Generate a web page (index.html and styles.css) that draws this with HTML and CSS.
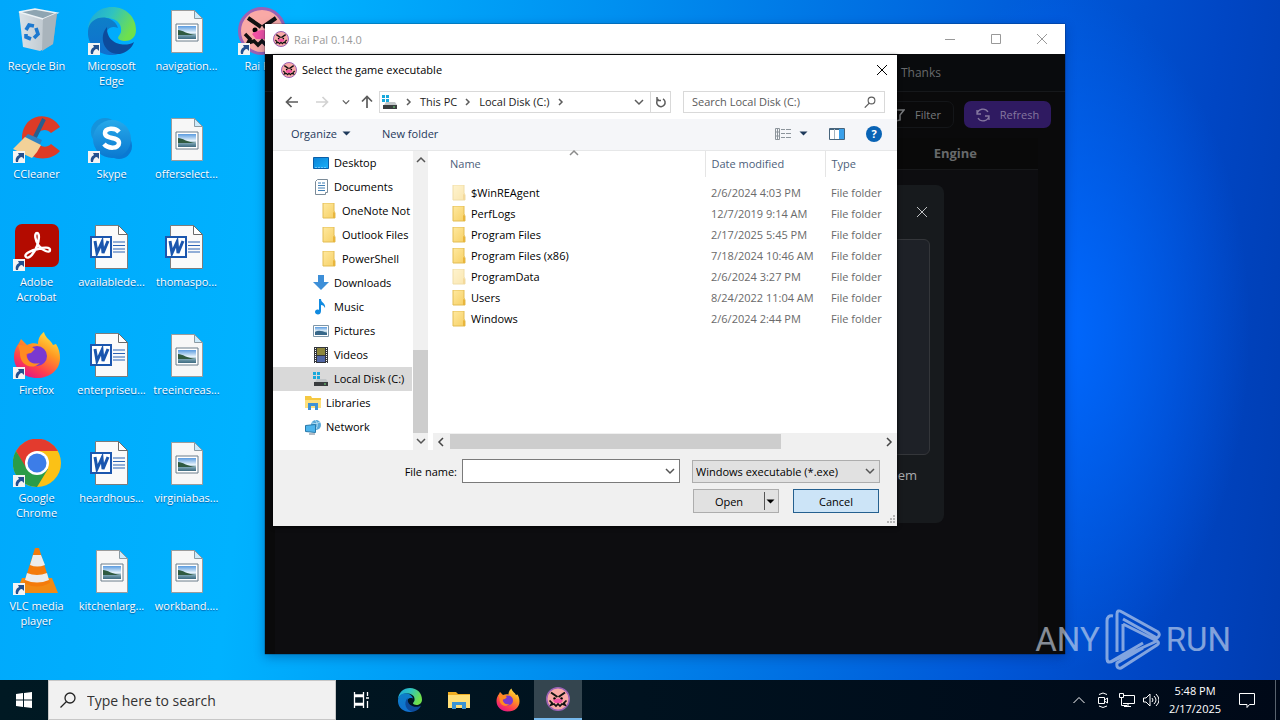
FILE: index.html
```html
<!DOCTYPE html>
<html lang="en">
<head>
<meta charset="utf-8">
<title>Desktop</title>
<link rel="stylesheet" href="styles.css">
</head>
<body>
<svg class="sprite" aria-hidden="true">
  <defs>
    <linearGradient id="g-edge" x1="0" y1="0" x2="1" y2="0.4"><stop offset="0" stop-color="#1aa5dc"/><stop offset="0.5" stop-color="#2fc3c0"/><stop offset="1" stop-color="#6fe04c"/></linearGradient>
    <linearGradient id="g-edge2" x1="0" y1="0" x2="0" y2="1"><stop offset="0" stop-color="#0d7fc8"/><stop offset="1" stop-color="#1070cf"/></linearGradient>
    <linearGradient id="g-ff" x1="0.9" y1="0" x2="0.3" y2="1"><stop offset="0" stop-color="#fff04a"/><stop offset="0.4" stop-color="#ff9a22"/><stop offset="0.75" stop-color="#ff3f4e"/><stop offset="1" stop-color="#e31587"/></linearGradient>
    <linearGradient id="g-sky" x1="0" y1="0" x2="0" y2="1"><stop offset="0" stop-color="#27a9ea"/><stop offset="1" stop-color="#0a78d0"/></linearGradient>
    <linearGradient id="g-pic" x1="0" y1="0" x2="0" y2="1"><stop offset="0" stop-color="#5a9be0"/><stop offset="0.5" stop-color="#e4f1fa"/><stop offset="0.75" stop-color="#6d97a8"/><stop offset="1" stop-color="#3e6b80"/></linearGradient>
    <linearGradient id="g-bin" x1="0" y1="0" x2="1" y2="0"><stop offset="0" stop-color="#d9e2e8"/><stop offset="0.6" stop-color="#c3ccd3"/><stop offset="1" stop-color="#8e9aa3"/></linearGradient>
    <linearGradient id="g-fold" x1="0" y1="0" x2="1" y2="1"><stop offset="0" stop-color="#ffe9a0"/><stop offset="1" stop-color="#f6cf63"/></linearGradient>
    <linearGradient id="g-desk" x1="0" y1="0" x2="1" y2="1"><stop offset="0" stop-color="#0c83d6"/><stop offset="1" stop-color="#18b0fa"/></linearGradient>
  </defs>
  <symbol id="i-link" viewBox="0 0 12 12"><path d="M0 0h12v12H0z" fill="#f4f4f4"/><path d="M3 11C2 7 4 5 6 4L5 2h6v6L9 6C7 6 5 8 5 11z" fill="#24508f"/></symbol>
  <symbol id="i-bin" viewBox="0 0 48 48"><path d="M6 5l4 35 17 4 13-7 4-31z" fill="url(#g-bin)"/><path d="M6 5l16-3 22 4-14 6z" fill="#8ea5b2" stroke="#edf3f6" stroke-width="1.5"/><path d="M30 12l-1 32 11-7 4-31z" fill="#a9b4bc"/><g fill="none" stroke="#1d79d0" stroke-width="3.6"><path d="M13 23l3-5 5 1M23 21l2 6-4 4M18 32l-5-2v-3"/></g></symbol>
  <symbol id="i-edge" viewBox="0 0 48 48"><path d="M24 0C11 0 1 9 0 22 4 13 13 10 20 11c11 1 14 8 13 14-1 3-3 4-3 6 1 4 18 6 18-8C48 10 38 0 24 0z" fill="url(#g-edge)"/><path d="M0 24C1 12 13 8 22 12c4 2 7 5 8 9-8-3-12 2-12 8 0 9 8 18 19 14-4 3-8 5-13 5C10 48-1 38 0 24z" fill="url(#g-edge2)"/><path d="M19 20c-9 10-3 28 13 27 7-2 12-6 14-12-9 6-28 2-27-15z" fill="#0d4b9c"/></symbol>
  <symbol id="i-pic" viewBox="0 0 32 43"><path d="M.5.5h23l8 8v34H.5z" fill="#f7f7f7" stroke="#9c9c9c"/><path d="M23.500.5v8h8z" fill="#cdeafa" stroke="#8b9aa3"/><path d="M5 14h22v17H5z" fill="#fff" stroke="#6a7d8a"/><path d="M7 16h18v13H7z" fill="url(#g-pic)"/><path d="M7 20c5 0 8 4 18 5H7z" fill="#2f5a40"/></symbol>
  <symbol id="i-word" viewBox="0 0 38 44"><path d="M5.500.5h23l9 9v34h-32z" fill="#fafafa" stroke="#7c7c7c"/><path d="M28.500.5v9h9z" fill="#fff" stroke="#6b6b6b"/><path d="M23 17h12M23 20.500h12M23 24h12M23 27h12" stroke="#2b62b4"/><path d="M1 12h20v20H1z" fill="#fff" stroke="#1b56ae" stroke-width="2"/><path d="M5 16l2 12 5-11 1 11 5-12" fill="none" stroke="#1b56ae" stroke-width="3"/></symbol>
  <symbol id="i-rai" viewBox="0 0 48 48"><circle cx="24" cy="24" r="22.500" fill="#f9a9a6" stroke="#9a62b5" stroke-width="3"/><path d="M10 11l13 9M38 11l-13 9" stroke="#111" stroke-width="4"/><circle cx="17" cy="23" r="2.500"/><circle cx="31" cy="23" r="2.500"/><path d="M14 27q10-8 20 0l-4 5H18z" fill="#f452a4"/><path d="M7 27l5 5-2 4 6-2 4 4 4-4 4 4 4-4 6 2-2-4 5-5" fill="none" stroke="#111" stroke-width="3.500"/></symbol>
  <symbol id="i-cc" viewBox="0 0 48 48"><path d="M47 12C40 0 25-2 16 6 7 14 6 32 17 40c10 6 23 4 30-4l-9-7c-5 5-13 3-14-5-1-9 9-12 14-6z" fill="#dd3b26"/><path d="M31 4L22 22" stroke="#275f8e" stroke-width="4"/><path d="M15 19l14 6-3 7-16-8z" fill="#2b83c4"/><path d="M12 22l16 8-4 7-5 6L0 34z" fill="#f2d198"/></symbol>
  <symbol id="i-skype" viewBox="0 0 48 48"><circle cx="17" cy="17" r="14" fill="#1593dc"/><circle cx="31" cy="31" r="13" fill="#0a79d2"/><circle cx="24" cy="24" r="19" fill="url(#g-sky)"/><path d="M31 17c-4-5-14-4-14 1 0 7 14 3 14 10 0 6-11 6-15 1" fill="none" stroke="#fff" stroke-width="4.500"/></symbol>
  <symbol id="i-acro" viewBox="0 0 48 48"><rect x="2" y="1" width="44" height="43" rx="7" fill="#b30b00"/><path d="M13 34c-3-3 6-7 12-8 6-2 12-2 12 1 0 4-8 0-11-4-4-5-5-13-2-13s2 8 0 13c-2 6-8 14-11 11z" fill="none" stroke="#fff" stroke-width="2.400"/></symbol>
  <symbol id="i-ff" viewBox="0 0 48 48"><path d="M6 12l2-4 6 6c4-2 8-2 11-1 0-6 3-10 6-12 1 6 7 8 9 13l3-1c3 5 4 9 4 14 0 12-10 20-23 20S1 38 1 26c0-6 2-10 5-14z" fill="url(#g-ff)"/><circle cx="24" cy="25" r="10" fill="#7a38d0"/><path d="M5 14c8 0 13 1 17 4l-4 4-5 1c1 8 7 11 14 9-8 8-21 2-20-11z" fill="#ff8b22"/></symbol>
  <symbol id="i-chrome" viewBox="0 0 48 48"><circle cx="24" cy="24" r="24" fill="#fbc116"/><path d="M24 12h21a24 24 0 0 0-42 0l10 18z" fill="#e33b2e"/><path d="M3 12a24 24 0 0 0 21 36l11-18H14z" fill="#2a9c48"/><circle cx="24" cy="24" r="12" fill="#fff"/><circle cx="24" cy="24" r="9.500" fill="#3c7de8"/></symbol>
  <symbol id="i-vlc" viewBox="0 0 48 48"><path d="M9 31h30l6 15H3z" fill="#f28a14"/><path d="M22 1h4l11 35q-13 7-26 0z" fill="#f47b0b"/><path d="M20 8h8l4 10q-8 3-15 0zM14 26q10 4 20 0l2 7q-12 5-24 0z" fill="#ececec"/></symbol>
  <symbol id="i-fold" viewBox="0 0 14 16"><path d="M1 0h11v8l1 2v5H1z" fill="url(#g-fold)" stroke="#e3bd55"/><path d="M11 9v6h2v-5z" fill="#e8b53c"/></symbol>
  <symbol id="i-desk" viewBox="0 0 16 16"><path d="M.5 2.500h15v11H.5z" fill="url(#g-desk)" stroke="#0a5ea8"/><path d="M2 12.500h12" stroke="#6cc6fa" stroke-dasharray="2 1"/></symbol>
  <symbol id="i-doc" viewBox="0 0 16 16"><path d="M4.500.5h10v13h-2v2h-10v-13z" fill="#fff" stroke="#7b8b98"/><path d="M5 4h3M5 6.500h7M5 9h7M5 11.500h7M9 4h3" stroke="#3f7fb5"/></symbol>
  <symbol id="i-down" viewBox="0 0 16 16"><path d="M5 0h6v7h5l-8 8-8-8h5z" fill="#3d8fd8"/></symbol>
  <symbol id="i-music" viewBox="0 0 16 16"><path d="M6 0h2c0 4 5 4 4 9-1-2-2-3-4-3v6c0 5-6 4-6 1 0-2 2-3 4-2z" fill="#108ae0"/></symbol>
  <symbol id="i-pics" viewBox="0 0 16 16"><path d="M.5 2.500h15v11H.5z" fill="#fff" stroke="#7d96a8"/><path d="M2 4h12v8H2z" fill="url(#g-pic)"/><path d="M2 9q4-3 12 1v2H2z" fill="#38688a"/></symbol>
  <symbol id="i-vid" viewBox="0 0 16 16"><path d="M1 0h14v16H1z" fill="#33363c"/><path d="M4 1h8v7H4z" fill="#8d873c"/><path d="M4 9h8v6H4z" fill="#5167a6"/><path d="M2.500 1v15M13.500 1v15" stroke="#fff" stroke-dasharray="1 1"/></symbol>
  <symbol id="i-disk" viewBox="0 0 16 16"><path d="M0 1h3v3H0zM4 1h3v3H4zM0 5h3v3H0zM4 5h3v3H4z" fill="#19a9dc"/><path d="M4 8h9l2 3H2z" fill="#c2c6c8"/><path d="M1 11h14v4H1z" fill="#3a3d3f"/><path d="M11 13h2" stroke="#6fe07b"/></symbol>
  <symbol id="i-lib" viewBox="0 0 16 16"><path d="M0 1h6l1 2h9v10H0z" fill="#f5c842"/><path d="M0 5h16v8H0z" fill="#ffe07c"/><path d="M3 15V8h10v7h-3v-4H6v4z" fill="#3e92d6"/></symbol>
  <symbol id="i-net" viewBox="0 0 16 16"><circle cx="11" cy="6" r="5" fill="#58a8d8"/><path d="M7 4q4 2 8-1M10 1q4 4 1 9" stroke="#b3ddf2" fill="none"/><path d="M.5 6.500l10-1v8l-10-1z" fill="#4db4ec" stroke="#2878a8"/><path d="M4 15h6" stroke="#67788a"/></symbol>
  <symbol id="i-down-chev" viewBox="0 0 10 10"><path d="M1 3l4 4 4-4" fill="none" stroke="currentColor" stroke-width="1.500"/></symbol>
  <symbol id="i-right-chev" viewBox="0 0 10 10"><path d="M3 2l3 3-3 3" fill="none" stroke="currentColor" stroke-width="1.500"/></symbol>
  <symbol id="i-x" viewBox="0 0 12 12"><path d="M1 1l10 10M11 1L1 11" fill="none" stroke="currentColor"/></symbol>
  <symbol id="i-glass" viewBox="0 0 16 16"><circle cx="10" cy="6" r="4.500" fill="none" stroke="currentColor" stroke-width="1.500"/><path d="M7 9.500l-6 6" stroke="currentColor" stroke-width="1.700"/></symbol>
  <symbol id="i-arrow" viewBox="0 0 14 12"><path d="M13 6H2M6.500 1L1.500 6l5 5" fill="none" stroke="currentColor" stroke-width="1.700"/></symbol>
  <symbol id="i-tri" viewBox="0 0 8 5"><path d="M0 .5h8l-4 4z" fill="currentColor"/></symbol>
</svg>

<main class="desktop">
  <ul class="shortcuts">
    <li><span class="art"><svg class="big"><use href="#i-bin"/></svg></span>Recycle Bin</li>
    <li><span class="art"><svg class="big"><use href="#i-cc"/></svg><svg class="link"><use href="#i-link"/></svg></span>CCleaner</li>
    <li><span class="art"><svg class="big"><use href="#i-acro"/></svg><svg class="link"><use href="#i-link"/></svg></span>Adobe Acrobat</li>
    <li><span class="art"><svg class="big"><use href="#i-ff"/></svg><svg class="link"><use href="#i-link"/></svg></span>Firefox</li>
    <li><span class="art"><svg class="big"><use href="#i-chrome"/></svg><svg class="link"><use href="#i-link"/></svg></span>Google Chrome</li>
    <li><span class="art"><svg class="big"><use href="#i-vlc"/></svg><svg class="link"><use href="#i-link"/></svg></span>VLC media player</li>
    <li><span class="art"><svg class="big"><use href="#i-edge"/></svg><svg class="link"><use href="#i-link"/></svg></span>Microsoft Edge</li>
    <li><span class="art"><svg class="big"><use href="#i-skype"/></svg><svg class="link"><use href="#i-link"/></svg></span>Skype</li>
    <li><span class="art"><svg class="word"><use href="#i-word"/></svg></span>availablede...</li>
    <li><span class="art"><svg class="word"><use href="#i-word"/></svg></span>enterpriseu...</li>
    <li><span class="art"><svg class="word"><use href="#i-word"/></svg></span>heardhous...</li>
    <li><span class="art"><svg class="file"><use href="#i-pic"/></svg></span>kitchenlarg...</li>
    <li><span class="art"><svg class="file"><use href="#i-pic"/></svg></span>navigation...</li>
    <li><span class="art"><svg class="file"><use href="#i-pic"/></svg></span>offerselect...</li>
    <li><span class="art"><svg class="word"><use href="#i-word"/></svg></span>thomaspo...</li>
    <li><span class="art"><svg class="file"><use href="#i-pic"/></svg></span>treeincreas...</li>
    <li><span class="art"><svg class="file"><use href="#i-pic"/></svg></span>virginiabas...</li>
    <li><span class="art"><svg class="file"><use href="#i-pic"/></svg></span>workband....</li>
    <li><span class="art"><svg class="big"><use href="#i-rai"/></svg><svg class="link"><use href="#i-link"/></svg></span>Rai Pal</li>
  </ul>

  <section class="app" aria-label="Rai Pal">
    <header class="app-title">
      <svg class="i16"><use href="#i-rai"/></svg><span>Rai Pal 0.14.0</span>
      <div class="caption">
        <button aria-label="Minimize"><svg class="i12" viewBox="0 0 12 12"><path d="M1 6.500h10" stroke="currentColor"/></svg></button>
        <button aria-label="Maximize"><svg class="i12" viewBox="0 0 12 12"><path d="M1.500 1.500h9v9h-9z" fill="none" stroke="currentColor"/></svg></button>
        <button aria-label="Close window"><svg class="i12"><use href="#i-x"/></svg></button>
      </div>
    </header>
    <div class="app-body">
      <nav class="tabs"><a href="#thanks">Thanks</a></nav>
      <div class="tools">
        <button class="filter"><svg class="i14" viewBox="0 0 14 14"><path d="M1 2h12L9 7v5l-4 1V7z" fill="none" stroke="currentColor" stroke-width="1.500"/></svg>Filter</button>
        <button class="refresh"><svg class="i14" viewBox="0 0 14 14"><path d="M1 6a6 6 0 0 1 11-2M13 8a6 6 0 0 1-11 2M1 2v4h4M13 12V8H9" fill="none" stroke="currentColor" stroke-width="1.300"/></svg>Refresh</button>
      </div>
      <div class="games"><div class="games-head">Engine</div></div>
      <div class="modal">
        <button aria-label="Close panel"><svg class="i12"><use href="#i-x"/></svg></button>
        <div class="drop"></div>
        <p>them</p>
      </div>
    </div>
  </section>

  <section class="dialog" role="dialog" aria-label="Select the game executable">
    <header class="dlg-title">
      <svg class="i16"><use href="#i-rai"/></svg><h1>Select the game executable</h1>
      <button aria-label="Close"><svg class="i12"><use href="#i-x"/></svg></button>
    </header>
    <div class="address">
      <button aria-label="Back"><svg class="arrow"><use href="#i-arrow"/></svg></button>
      <button class="off" aria-label="Forward"><svg class="arrow flip"><use href="#i-arrow"/></svg></button>
      <button class="small" aria-label="Recent"><svg class="i8"><use href="#i-down-chev"/></svg></button>
      <button class="small" aria-label="Up"><svg class="arrow up"><use href="#i-arrow"/></svg></button>
      <div class="path">
        <svg class="i16"><use href="#i-disk"/></svg><svg class="i10"><use href="#i-right-chev"/></svg>
        <a href="#pc">This PC</a><svg class="i10"><use href="#i-right-chev"/></svg>
        <a href="#c">Local Disk (C:)</a><svg class="i10"><use href="#i-right-chev"/></svg>
        <button class="drop-path" aria-label="Previous locations"><svg class="i10"><use href="#i-down-chev"/></svg></button>
        <button class="reload" aria-label="Reload"><svg class="i12" viewBox="0 0 12 12"><path d="M8 2.800A4.200 4.200 0 1 1 3.500 3M2 1v3.500h4" fill="none" stroke="currentColor" stroke-width="1.500"/></svg></button>
      </div>
      <label class="find"><input type="text" placeholder="Search Local Disk (C:)" aria-label="Search Local Disk (C:)"><svg class="i12"><use href="#i-glass"/></svg></label>
    </div>
    <div class="commands">
      <button>Organize <svg class="tri wide"><use href="#i-tri"/></svg></button>
      <button>New folder</button>
      <div class="views">
        <button aria-label="Change view"><svg class="i16" viewBox="0 0 16 16"><path d="M.5 2.500h4v11h-4zM.5 6h4M.5 10h4M2.500 2v12" fill="none" stroke="#8c949b"/><path d="M6 3.500h4M11 3.500h5M6 7.500h4M11 7.500h5M6 11.500h4M11 11.500h5" stroke="#8c949b"/></svg><svg class="tri wide"><use href="#i-tri"/></svg></button>
        <button aria-label="Preview pane"><svg class="i16" viewBox="0 0 16 16"><path d="M.5 2.500h15v11H.5z" fill="#fff" stroke="#46647c"/><path d="M1 3.500h14" stroke="#46647c"/><path d="M10 3h5v10h-5z" fill="#3aa0ea"/><path d="M5.500 3v10" stroke="#a3b3bf"/></svg></button>
        <button class="help" aria-label="Help">?</button>
      </div>
    </div>
    <div class="panes">
      <ul class="tree">
        <li class="l2"><svg class="i16"><use href="#i-desk"/></svg>Desktop</li>
        <li class="l2"><svg class="i16"><use href="#i-doc"/></svg>Documents</li>
        <li class="l3"><svg class="i16"><use href="#i-fold"/></svg>OneNote Not</li>
        <li class="l3"><svg class="i16"><use href="#i-fold"/></svg>Outlook Files</li>
        <li class="l3"><svg class="i16"><use href="#i-fold"/></svg>PowerShell</li>
        <li class="l2"><svg class="i16"><use href="#i-down"/></svg>Downloads</li>
        <li class="l2"><svg class="i16"><use href="#i-music"/></svg>Music</li>
        <li class="l2"><svg class="i16"><use href="#i-pics"/></svg>Pictures</li>
        <li class="l2"><svg class="i16"><use href="#i-vid"/></svg>Videos</li>
        <li class="l2 on"><svg class="i16"><use href="#i-disk"/></svg>Local Disk (C:)</li>
        <li class="l1"><svg class="i16"><use href="#i-lib"/></svg>Libraries</li>
        <li class="l1"><svg class="i16"><use href="#i-net"/></svg>Network</li>
      </ul>
      <div class="vbar"><svg class="i10 up180"><use href="#i-down-chev"/></svg><div class="vthumb"></div><svg class="i10"><use href="#i-down-chev"/></svg></div>
      <div class="list">
        <table>
          <thead><tr><th class="c-name">Name<svg class="sort i10"><use href="#i-down-chev"/></svg></th><th class="c-date">Date modified</th><th>Type</th></tr></thead>
          <tbody>
            <tr><td class="dim"><svg class="i16"><use href="#i-fold"/></svg>$WinREAgent</td><td>2/6/2024 4:03 PM</td><td>File folder</td></tr>
            <tr><td><svg class="i16"><use href="#i-fold"/></svg>PerfLogs</td><td>12/7/2019 9:14 AM</td><td>File folder</td></tr>
            <tr><td><svg class="i16"><use href="#i-fold"/></svg>Program Files</td><td>2/17/2025 5:45 PM</td><td>File folder</td></tr>
            <tr><td><svg class="i16"><use href="#i-fold"/></svg>Program Files (x86)</td><td>7/18/2024 10:46 AM</td><td>File folder</td></tr>
            <tr><td class="dim"><svg class="i16"><use href="#i-fold"/></svg>ProgramData</td><td>2/6/2024 3:27 PM</td><td>File folder</td></tr>
            <tr><td><svg class="i16"><use href="#i-fold"/></svg>Users</td><td>8/24/2022 11:04 AM</td><td>File folder</td></tr>
            <tr><td><svg class="i16"><use href="#i-fold"/></svg>Windows</td><td>2/6/2024 2:44 PM</td><td>File folder</td></tr>
          </tbody>
        </table>
        <div class="hbar"><svg class="i10 left"><use href="#i-down-chev"/></svg><div class="htrack"><div class="hthumb"></div></div><svg class="i10 right"><use href="#i-down-chev"/></svg></div>
      </div>
    </div>
    <form class="choose">
      <label for="fname">File name:</label>
      <div class="combo"><input id="fname" type="text"><svg class="i10"><use href="#i-down-chev"/></svg></div>
      <div class="combo grey"><select aria-label="File type"><option>Windows executable (*.exe)</option></select><svg class="i10"><use href="#i-down-chev"/></svg></div>
      <div class="actions">
        <button type="button" class="open"><span>Open</span><i></i><svg class="tri wide"><use href="#i-tri"/></svg></button>
        <button type="button" class="cancel">Cancel</button>
      </div>
      <svg class="grip" viewBox="0 0 10 10"><path d="M7 0h2v2H7zM4 3h2v2H4zM7 3h2v2H7zM1 6h2v2H1zM4 6h2v2H4zM7 6h2v2H7z" fill="#b5b5b5"/></svg>
    </form>
  </section>

  <div class="mark"><span>ANY</span><svg viewBox="0 0 56 64"><path d="M8 8Q2 7 2 13v38q0 5 5 2l31-18M12 44V6q0-5 5-2l36 20q3 3-1 6L18 11M18 16v27M2 51q1 5 6 2l44-20M18 16l34 17q3 2 0 4L16 60q-5 1-4-5l26-15" fill="none" stroke="currentColor" stroke-width="3"/></svg><span>RUN</span></div>
</main>

<footer class="taskbar">
  <button class="start" aria-label="Start"><svg class="i16" viewBox="0 0 16 16"><path d="M0 2l7-1v6.500H0zM8 1l8-1v7.500H8zM0 8.500h7V15l-7-1zM8 8.500h8V16l-8-1z" fill="#fff"/></svg></button>
  <label class="search"><svg class="i16" viewBox="0 0 16 16"><circle cx="10" cy="6" r="5" fill="none" stroke="currentColor" stroke-width="1.300"/><path d="M6.500 9.500L.5 15.500" stroke="currentColor" stroke-width="1.300"/></svg><input type="text" placeholder="Type here to search" aria-label="Type here to search"></label>
  <div class="pinned">
    <button aria-label="Task View"><svg class="i18" viewBox="0 0 18 18"><path d="M2.500 1v3h9V1M2.500 17v-3h9v3M2.500 5.500h9v7h-9zM15.500 1v4M15.500 10v7M14 7h3" fill="none" stroke="#fff" stroke-width="1.300"/></svg></button>
    <button aria-label="Microsoft Edge"><svg class="i24"><use href="#i-edge"/></svg></button>
    <button aria-label="File Explorer"><svg class="i24" viewBox="0 0 24 24"><path d="M1 4h8l2 2h12v14H1z" fill="#f0ae22"/><path d="M1 7h22v13H1z" fill="#ffdf77"/><path d="M5 21v-7h14v7h-4v-4H9v4z" fill="#3a93d4"/></svg></button>
    <button aria-label="Firefox"><svg class="i24"><use href="#i-ff"/></svg></button>
    <button class="active" aria-label="Rai Pal"><svg class="i24"><use href="#i-rai"/></svg></button>
  </div>
  <div class="tray">
    <svg class="i16" viewBox="0 0 16 16"><path d="M2.500 11L8 5.500l5.500 5.500"/></svg>
    <svg class="i16" viewBox="0 0 16 16"><path d="M3.500 5.500h6v6h-6zM9.500 8l3-2v5l-3-2M4 2.500q4-3 8 0M4 14q4 3 8 0"/></svg>
    <svg class="i16" viewBox="0 0 16 16"><path d="M4 3.500h11.500v8H4M.5 1.500h4v4h-4zM2.500 5.500v8H8M5 14.500h7M9 12v2"/></svg>
    <svg class="i16" viewBox="0 0 16 16"><path d="M.5 6v4h2.500l4 4V2L3 6zM9 6q2 2 0 4M11 4q4 4 0 8M13 2q6 6 0 12"/></svg>
    <time class="clock"><span>5:48 PM</span><span>2/17/2025</span></time>
    <svg class="note i16" viewBox="0 0 16 16"><path d="M.5 1.500h15v11h-5l-2.500 3v-3H.5z"/></svg>
    <div class="peek"></div>
  </div>
</footer>
</body>
</html>
```
FILE: styles.css
```css
* { box-sizing: border-box; }
body { margin: 0; height: 100vh; display: flex; flex-direction: column; overflow: hidden; font: 11px/15px "Open Sans", "Noto Sans", sans-serif; color: #000; }
button, input, select { font: inherit; color: inherit; border: 0; margin: 0; padding: 0; background: none; border-radius: 0; }
button { display: flex; align-items: center; justify-content: center; }
a { color: inherit; text-decoration: none; }
ul { list-style: none; margin: 0; padding: 0; }
svg { flex: none; display: block; }
.sprite { position: absolute; width: 0; height: 0; }
.i8 { width: 8px; height: 8px; }
.i10 { width: 10px; height: 10px; }
.i12 { width: 12px; height: 12px; }
.i14 { width: 14px; height: 14px; }
.i16 { width: 16px; height: 16px; }
.i18 { width: 18px; height: 18px; }
.i24 { width: 24px; height: 24px; }

.desktop { flex: 1; min-height: 0; position: relative; overflow: hidden; background: radial-gradient(ellipse 190px 340px at 1060px 330px, #0068ff 0%, #0060f500 100%), linear-gradient(97deg, #00a8fb 0%, #00b2ff 22%, #0090f0 45%, #0058d8 78%, #0046c4 90%, #003cb0 100%); }
.shortcuts { display: grid; grid-auto-flow: column; grid-template-rows: repeat(6, 108px); grid-auto-columns: 75px; width: max-content; }
.shortcuts li { padding: 7px 2px 0 0; text-align: center; color: #fff; text-shadow: 0 1px 1px #0058a0; }
.art { position: relative; display: flex; width: 48px; height: 48px; margin: 0 auto 3px; align-items: center; justify-content: center; }
.big { width: 48px; height: 48px; }
.file { width: 32px; height: 43px; }
.word { width: 38px; height: 44px; margin-right: 6px; }
.link { position: absolute; left: 0; bottom: 0; width: 12px; height: 12px; }

.app { position: absolute; left: 265px; top: 24px; width: 800px; height: 630px; display: flex; flex-direction: column; background: #0a0a0b; box-shadow: 0 0 1px #000, 0 3px 10px #00206060; }
.app-title { display: flex; align-items: center; gap: 5px; height: 30px; padding-left: 8px; background: #fff; color: #999; }
.caption { margin-left: auto; display: flex; }
.caption button { width: 46px; height: 30px; }
.app-body { position: relative; flex: 1; display: flex; flex-direction: column; font-size: 12px; color: #67696b; }
.tabs { display: flex; justify-content: flex-end; height: 38px; align-items: center; padding-right: 124px; background: #090b0d; border-bottom: 1px solid #16181b; }
.tools { display: flex; justify-content: flex-end; gap: 10px; padding: 9px 14px 10px; font-size: 11px; }
.tools button { height: 27px; gap: 10px; border-radius: 7px; }
.filter { width: 76px; border: 1px solid #141619; color: #77797c; }
.refresh { width: 87px; background: #2f1a61; color: #85779f; }
.games { flex: 1; margin: 0 27px 0 10px; background: #0d0d10; }
.games-head { display: flex; justify-content: flex-end; height: 32px; align-items: center; padding-right: 61px; background: #090909; border-bottom: 1px solid #17181a; font-size: 13px; font-weight: 700; }
.modal { position: absolute; left: 122px; right: 121px; top: 131px; height: 338px; display: flex; flex-direction: column; padding: 14px; border-radius: 8px; background: #171a1d; }
.modal button { align-self: flex-end; width: 16px; height: 26px; color: #bfc1c3; }
.drop { margin-top: 14px; height: 216px; border: 1px solid #34363a; border-radius: 6px; background: #1e2127; }
.modal p { margin: 13px 13px 0 0; text-align: right; font-size: 13px; color: #a9abad; }

.dialog { position: absolute; left: 273px; top: 55px; width: 624px; height: 471px; display: flex; flex-direction: column; background: #fff; box-shadow: 0 1px 4px #000; }
.dlg-title { display: flex; align-items: center; gap: 5px; height: 29px; padding: 0 9px 0 8px; }
.dlg-title h1 { font: inherit; margin: 0; }
.dlg-title button { margin-left: auto; }
.address { display: flex; align-items: center; height: 35px; padding: 0 12px 0 4px; color: #5c5c5c; }
.address > button { width: 30px; height: 22px; }
.address > .off { color: #d2d2d2; }
.address > .small { width: 18px; }
.address > .small + .small { width: 24px; }
.arrow { width: 14px; height: 12px; }
.flip { transform: scaleX(-1); }
.up { transform: rotate(90deg); }
.path { flex: 1; display: flex; align-items: center; gap: 6px; height: 22px; padding-left: 2px; border: 1px solid #d9d9d9; }
.path a { color: #222; }
.drop-path { margin-left: auto; width: 10px; height: 20px; }
.reload { width: 20px; height: 20px; border-left: 1px solid #d9d9d9; }
.find { display: flex; align-items: center; width: 202px; height: 22px; margin-left: 12px; padding: 0 8px; border: 1px solid #d9d9d9; }
.find input { flex: 1; min-width: 0; outline: 0; }
input::placeholder { color: #5a5a5a; opacity: 1; }
.commands { display: flex; align-items: center; gap: 31px; height: 32px; padding: 0 15px 2px 18px; background: #f5f6f9; border-bottom: 1px solid #e6e7e8; color: #1e395b; }
.commands button { gap: 5px; }
.tri.wide { width: 9px; height: 5px; }
.views { margin-left: auto; display: flex; align-items: center; gap: 21px; }
.views button:first-child { gap: 8px; }
.commands .help { width: 16px; height: 16px; border-radius: 50%; background: #0963b5; color: #fff; font-weight: 700; }
.panes { flex: 1; min-height: 0; display: flex; }
.tree { width: 140px; overflow: hidden; padding-right: 1px; }
.tree li { display: flex; align-items: center; gap: 5px; height: 24px; padding-bottom: 1px; white-space: nowrap; overflow: hidden; }
.tree .l1 { padding-left: 32px; }
.tree .l2 { padding-left: 40px; }
.tree .l3 { padding-left: 48px; }
.tree .on { background: #d9d9d9; }
.vbar { display: flex; flex-direction: column; align-items: center; width: 15px; padding: 4px 0; background: #f0f0f0; color: #555; }
.vthumb { width: 15px; height: 83px; margin: auto 0 3px; background: #cdcdcd; }
.list { flex: 1; min-width: 0; margin-left: 5px; display: flex; flex-direction: column; }
table { width: 100%; border-collapse: collapse; table-layout: fixed; color: #6a6a6a; }
th { position: relative; height: 26px; padding: 0 6px 1px; text-align: left; font-weight: 400; color: #4c607a; border-right: 1px solid #e5e5e5; }
th:last-child { border-right: 0; }
.c-name { width: 272px; padding-left: 17px; }
.c-date { width: 120px; }
.sort { position: absolute; left: 136px; top: -3px; transform: scaleY(-1); color: #8b8b8b; }
thead::after { content: ""; display: block; height: 5px; }
td { height: 21px; padding: 0 6px; white-space: nowrap; }
td:first-child { display: flex; align-items: center; gap: 4px; padding-left: 18px; color: #000; }
.dim svg { opacity: 0.5; }
.hbar { display: flex; align-items: center; height: 17px; margin-top: auto; padding: 0 3px; gap: 4px; background: #f0f0f0; color: #444; }
.htrack { flex: 1; height: 15px; }
.hthumb { width: 77%; height: 15px; background: #cdcdcd; }
.left { transform: rotate(90deg); }
.right { transform: rotate(-90deg); }
.up180 { transform: rotate(180deg); }
.choose { position: relative; display: grid; grid-template-columns: 1fr 218px 188px; column-gap: 12px; row-gap: 6px; align-items: center; height: 76px; padding: 9px 17px 13px; background: #f0f0f0; }
.choose label { justify-self: end; margin-right: -7px; }
.combo { display: flex; align-items: center; height: 24px; padding-right: 4px; border: 1px solid #7a7a7a; background: #fff; color: #555; }
.combo input, .combo select { flex: 1; min-width: 0; height: 100%; outline: 0; padding: 0 3px; appearance: none; color: #000; }
.combo.grey { height: 23px; background: #e1e1e1; border-color: #adadad; }
.actions { grid-column: 3; display: flex; justify-content: space-between; padding: 0 1px; }
.actions button { width: 86px; height: 24px; border: 1px solid #adadad; background: #e1e1e1; }
.open span { flex: 1; }
.open i { width: 1px; height: 18px; background: #555; }
.open svg { margin: 0 3px 0 1px; }
.actions .cancel { border-color: #25608f; background: #cce4f7; }
.grip { position: absolute; right: 1px; bottom: 1px; width: 10px; height: 10px; }

.mark { position: absolute; right: 49px; bottom: 8px; display: flex; align-items: center; gap: 5px; height: 64px; color: #d8e2f2; opacity: 0.6; font: 33px/64px "Liberation Sans Narrow", "Roboto", sans-serif; }
.mark svg { width: 56px; height: 64px; }

.taskbar { display: flex; height: 40px; background: linear-gradient(90deg, #001923, #00121f 50%, #000918); color: #fff; }
.start { width: 48px; height: 40px; }
.search { display: flex; align-items: center; gap: 11px; width: 288px; padding: 0 12px 0 11px; background: #f1f1f1; border: 1px solid #c7c7c7; color: #222; }
.search input { flex: 1; min-width: 0; height: 24px; outline: 0; font-size: 14px; }
.search input::placeholder { color: #333; }
.pinned { display: flex; }
.pinned button { width: 49px; height: 40px; }
.pinned .active { margin-left: 2px; width: 48px; background: #34454f; border-bottom: 2px solid #76b9ed; }
.tray { margin-left: auto; display: flex; align-items: center; gap: 8px; }
.tray svg { fill: none; stroke: #fff; }
.clock { display: flex; flex-direction: column; align-items: center; width: 56px; line-height: 18px; }
.note { margin: 0 12px 0 8px; }
.peek { width: 5px; height: 40px; border-left: 1px solid #59636e; }
```
